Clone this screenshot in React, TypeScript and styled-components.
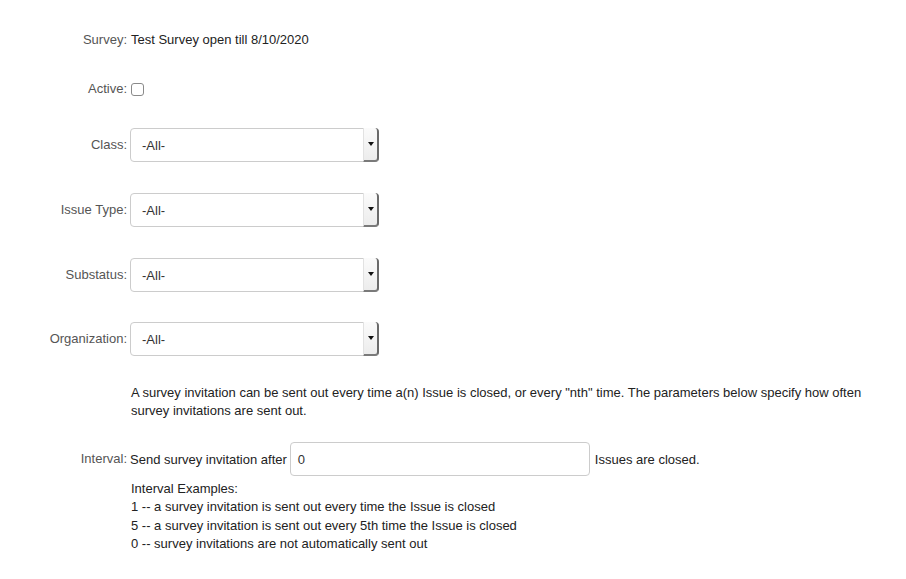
import { createGlobalStyle, styled } from "styled-components";

const GlobalStyle = createGlobalStyle`
  html, body {
    margin: 0;
    background: #fff;
  }
  body {
    font-family: "Liberation Sans", Arial, Helvetica, sans-serif;
    font-size: 13px;
    color: #333;
  }
`;

const Form = styled.div`
  display: flex;
  flex-direction: column;
  padding-top: 23px;
  width: 906px;
`;

const Row = styled.div<{ $mt?: number }>`
  display: grid;
  grid-template-columns: 127px 1fr;
  column-gap: 3px;
  align-items: center;
  min-height: 34px;
  margin-top: ${(p) => p.$mt ?? 0}px;
`;

const Label = styled.div`
  text-align: right;
  color: #555;
  line-height: 18px;
`;

const Value = styled.div`
  color: #222;
  line-height: 18px;
  padding-left: 1px;
`;

const Checkbox = styled.span`
  display: block;
  width: 11px;
  height: 11px;
  margin-left: 1px;
  border: 1px solid #8a8a8a;
  border-radius: 3px;
  background: #fff;
`;

const SelectBox = styled.div`
  display: flex;
  width: 249px;
  height: 34px;
  box-sizing: border-box;
  border: 1px solid #ccc;
  border-radius: 4px;
  background: #fff;
`;

const SelectText = styled.div`
  flex: 1;
  display: flex;
  align-items: center;
  padding-left: 11px;
  color: #333;
`;

const SelectArrow = styled.div`
  width: 13px;
  margin: -1px -1px -1px 0;
  display: flex;
  align-items: center;
  justify-content: center;
  background: linear-gradient(#fbfbfb, #ececec);
  border-left: 1px solid #e2e2e2;
  border-right: 2px solid #6a6a6a;
  border-bottom: 2px solid #7a7a7a;
  border-radius: 0 4px 4px 0;
  &::after {
    content: "";
    border-left: 3px solid transparent;
    border-right: 3px solid transparent;
    border-top: 4px solid #111;
  }
`;

const Content = styled.div<{ $mt?: number }>`
  margin-top: ${(p) => p.$mt ?? 0}px;
  margin-left: 131px;
  width: 740px;
  line-height: 18px;
  color: #222;
`;

const InlineRow = styled.div`
  display: flex;
  align-items: center;
  gap: 3px;
  color: #222;
`;

const TextInput = styled.div`
  width: 300px;
  height: 34px;
  box-sizing: border-box;
  border: 1px solid #ccc;
  border-radius: 4px;
  display: flex;
  align-items: center;
  padding-left: 7px;
  color: #333;
  margin-right: 2px;
`;

const ExampleLine = styled.div`
  line-height: 18.3px;
`;

function Select({ value }: { value: string }) {
  return (
    <SelectBox>
      <SelectText>{value}</SelectText>
      <SelectArrow />
    </SelectBox>
  );
}

const filters = [
  { label: "Class:", mt: 22 },
  { label: "Issue Type:", mt: 31 },
  { label: "Substatus:", mt: 31 },
  { label: "Organization:", mt: 30 },
];

const examples = [
  "Interval Examples:",
  "1 -- a survey invitation is sent out every time the Issue is closed",
  "5 -- a survey invitation is sent out every 5th time the Issue is closed",
  "0 -- survey invitations are not automatically sent out",
];

function App() {
  return (
    <>
      <GlobalStyle />
      <Form>
        <Row>
          <Label>Survey:</Label>
          <Value>Test Survey open till 8/10/2020</Value>
        </Row>
        <Row $mt={15}>
          <Label>Active:</Label>
          <Checkbox />
        </Row>
        {filters.map((f) => (
          <Row key={f.label} $mt={f.mt}>
            <Label>{f.label}</Label>
            <Select value="-All-" />
          </Row>
        ))}
        <Content $mt={28}>
          A survey invitation can be sent out every time a(n) Issue is closed, or every "nth"
          time. The parameters below specify how often survey invitations are sent out.
        </Content>
        <Row $mt={22}>
          <Label>Interval:</Label>
          <InlineRow>
            <span>Send survey invitation after</span>
            <TextInput>0</TextInput>
            <span>Issues are closed.</span>
          </InlineRow>
        </Row>
        <Content $mt={4}>
          {examples.map((line) => (
            <ExampleLine key={line}>{line}</ExampleLine>
          ))}
        </Content>
      </Form>
    </>
  );
}

export default App;
